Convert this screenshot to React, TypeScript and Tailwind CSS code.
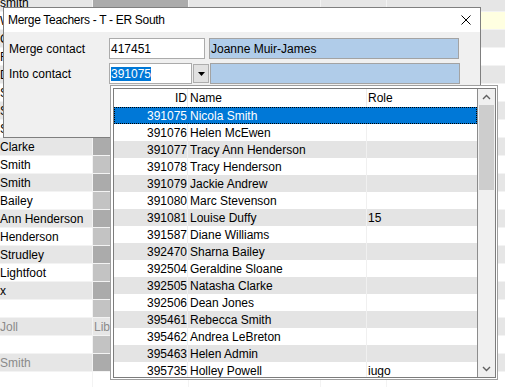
import React from "react";

const bgNames = [
  "smith",
  "Walsh",
  "Cooper",
  "Reid",
  "Dunn",
  "Smith",
  "Scott",
  "Shaw",
  "Clarke",
  "Smith",
  "Smith",
  "Bailey",
  "Ann Henderson",
  "Henderson",
  "Strudley",
  "Lightfoot",
  "x",
  "",
  "Joll",
  "",
  "Smith",
  "",
];

const contacts = [
  { id: "391075", name: "Nicola Smith", role: "" },
  { id: "391076", name: "Helen McEwen", role: "" },
  { id: "391077", name: "Tracy Ann Henderson", role: "" },
  { id: "391078", name: "Tracy Henderson", role: "" },
  { id: "391079", name: "Jackie Andrew", role: "" },
  { id: "391080", name: "Marc Stevenson", role: "" },
  { id: "391081", name: "Louise Duffy", role: "15" },
  { id: "391587", name: "Diane Williams", role: "" },
  { id: "392470", name: "Sharna Bailey", role: "" },
  { id: "392504", name: "Geraldine Sloane", role: "" },
  { id: "392505", name: "Natasha Clarke", role: "" },
  { id: "392506", name: "Dean Jones", role: "" },
  { id: "395461", name: "Rebecca Smith", role: "" },
  { id: "395462", name: "Andrea LeBreton", role: "" },
  { id: "395463", name: "Helen Admin", role: "" },
  { id: "395735", name: "Holley Powell", role: "iugo" },
];

// grid of teachers sitting behind the dialog
const BackgroundGrid = () => {
  return (
    <div className="-mt-[6px] grid grid-cols-[92px_95px_131px_65px_1fr] auto-rows-[17px] gap-px bg-[#f3f3f3]">
      {bgNames.map((name, i) => {
        const even = i % 2 === 0;
        const rowBg = i === 21 ? "bg-white" : even ? "bg-[#e6e6e6]" : "bg-white";
        const dim = i === 18 || i === 20;
        const covered = i >= 1 && i <= 7; // only a sliver shows left of the dialog
        let lockBg = even ? "bg-[#ababab]" : "bg-[#c3c3c3]";
        if (i === 18) lockBg = "bg-[#e6e6e6]";
        if (i === 21) lockBg = "bg-white";
        const restBg = i === 1 ? "bg-[#ffffe1]" : rowBg;
        return (
          <React.Fragment key={`bg-${i}`}>
            <div
              className={`${rowBg} flex items-center overflow-hidden whitespace-nowrap leading-none ${
                dim ? "text-[#8a8a8a]" : "text-black"
              }`}
            >
              {covered ? <span className="block w-[3px] overflow-hidden">{name}</span> : name}
            </div>
            <div className={`${lockBg} flex items-center overflow-hidden whitespace-nowrap pl-px leading-none text-[#8a8a8a]`}>
              {i === 18 ? "Library" : ""}
            </div>
            <div className={restBg} />
            <div className={restBg} />
            <div className={restBg} />
          </React.Fragment>
        );
      })}
    </div>
  );
};

const ContactList = () => {
  return (
    <div className="absolute left-[110px] top-[85px] h-[295px] w-[388px] border border-[#9f9f9f] bg-white pb-px pl-[2px] pr-px pt-[2px]">
      <div className="flex h-full border border-[#7c7c7c]">
        <div className="flex w-[364px] flex-col overflow-hidden border-r border-[#8c8c8c]">
          <div className="flex h-[18px] shrink-0 items-center bg-white leading-none text-black">
            <div className="w-[73px] text-right">ID</div>
            <div className="h-full w-px bg-[#ececec]" />
            <div className="w-[178px] pl-[2px]">Name</div>
            <div className="h-full w-px bg-[#ececec]" />
            <div className="flex-1 pl-px">Role</div>
          </div>
          {contacts.map((c, i) => {
            const selected = i === 0;
            const bg = selected ? "bg-[#0078d7] text-white" : i % 2 === 0 ? "bg-[#e4e4e4] text-black" : "bg-white text-black";
            return (
              <div
                key={c.id}
                className={`${bg} flex h-[17px] shrink-0 items-center whitespace-nowrap leading-none ${
                  selected ? "outline-1 outline-dotted outline-black -outline-offset-1" : ""
                }`}
              >
                <div className="w-[73px] text-right">{c.id}</div>
                <div className={`h-full w-px ${selected ? "" : "bg-[#f0f0f0]"}`} />
                <div className="w-[178px] pl-[2px]">{c.name}</div>
                <div className={`h-full w-px ${selected ? "" : "bg-[#f0f0f0]"}`} />
                <div className="flex-1 pl-px">{c.role}</div>
              </div>
            );
          })}
        </div>
        <div className="flex w-[17px] flex-col bg-[#f0f0f0]">
          <div className="flex h-[16px] items-center justify-center">
            <svg width="9" height="6" viewBox="0 0 9 6">
              <path d="M1 5 L4.5 1.5 L8 5" fill="none" stroke="#606060" strokeWidth="1.4" />
            </svg>
          </div>
          <div className="mx-px h-[85px] bg-[#cdcdcd]" />
          <div className="flex-1" />
          <div className="flex h-[17px] items-center justify-center">
            <svg width="9" height="6" viewBox="0 0 9 6">
              <path d="M1 1 L4.5 4.5 L8 1" fill="none" stroke="#606060" strokeWidth="1.4" />
            </svg>
          </div>
        </div>
      </div>
    </div>
  );
};

const MergeDialog = () => {
  return (
    <div className="absolute left-[3px] top-[7px] flex h-[131px] w-[478px] flex-col border border-[#7f7f7f] bg-[#f0f0f0]">
      <div className="flex h-[24px] shrink-0 items-center justify-between bg-white pl-[4px] pr-[9px]">
        <span className="tracking-[-0.3px] text-black">Merge Teachers - T - ER South</span>
        <svg width="10" height="10" viewBox="0 0 10 10">
          <path d="M0.5 0.5 L9.5 9.5 M9.5 0.5 L0.5 9.5" stroke="#000" strokeWidth="1" />
        </svg>
      </div>
      <div className="flex flex-col gap-[4px] pl-[5px] pt-[6px] leading-none text-black">
        <div className="flex h-[21px] items-center">
          <span className="w-[100px]">Merge contact</span>
          <div className="flex h-[21px] w-[96px] items-center border border-[#ababab] bg-white pl-px">417451</div>
          <div className="ml-[4px] flex h-[21px] w-[250px] items-center border border-[#a3a3a3] bg-[#b0cce9] pl-px">
            Joanne Muir-James
          </div>
        </div>
        <div className="flex h-[21px] items-center">
          <span className="w-[100px]">Into contact</span>
          <div className="flex h-[21px] w-[83px] items-center border border-[#ababab] bg-white pl-px">
            <span className="flex h-[14px] items-center bg-[#0078d7] text-white">391075</span>
          </div>
          <div className="ml-px flex h-[19px] w-[16px] items-center justify-center border border-[#adadad] bg-[#e1e1e1]">
            <svg width="7" height="4" viewBox="0 0 7 4">
              <path d="M0 0 L7 0 L3.5 4 Z" fill="#000" />
            </svg>
          </div>
          <div className="ml-px h-[21px] w-[250px] border border-[#a3a3a3] bg-[#b0cce9]" />
        </div>
      </div>
    </div>
  );
};

export default function App() {
  return (
    <div className="relative h-[387px] w-[505px] overflow-hidden bg-white font-['Liberation_Sans',Arial,sans-serif] text-[12px]">
      <BackgroundGrid />
      <MergeDialog />
      <ContactList />
    </div>
  );
}
